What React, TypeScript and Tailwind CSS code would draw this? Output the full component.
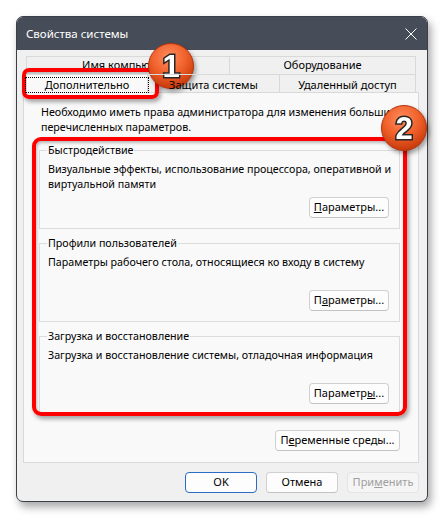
import React from "react";

const ui = "font-['Noto_Sans',sans-serif]";

function Badge({ n }: { n: number }) {
  return (
    <svg width="48" height="48" viewBox="0 0 48 48" className="drop-shadow-[2px_3px_2px_rgba(0,0,0,0.35)]">
      <defs>
        <radialGradient id={`badge${n}`} cx="45%" cy="30%" r="70%">
          <stop offset="0" stopColor="#ff8c5e" />
          <stop offset="0.55" stopColor="#f0602a" />
          <stop offset="1" stopColor="#c8390c" />
        </radialGradient>
      </defs>
      <circle cx="24" cy="24" r="22.5" fill={`url(#badge${n})`} stroke="#b5330b" strokeWidth="1" />
      <text
        x="24"
        y="35"
        textAnchor="middle"
        fontFamily="Liberation Sans, Arial, sans-serif"
        fontWeight="700"
        fontSize="31"
        fill="#ffffff"
        stroke="#262626"
        strokeWidth="3"
        paintOrder="stroke"
      >
        {n}
      </text>
    </svg>
  );
}

function Btn({ children, className = "" }: { children: React.ReactNode; className?: string }) {
  return (
    <div
      className={`h-[21px] flex items-center justify-center whitespace-nowrap rounded-[4px] border border-[#d0d0d0] border-b-[#c2c2c2] bg-[#fdfdfd] text-[11px] ${className}`}
    >
      {children}
    </div>
  );
}

function Group({ title, lines, btn }: { title: string; lines: React.ReactNode; btn: React.ReactNode }) {
  return (
    <fieldset className="w-[361px] min-w-0 border border-[#dcdcdc] px-[8px] pb-[10px]">
      <legend className="ml-[-1px] px-[1px] text-[10.7px] leading-[15px] text-black">{title}</legend>
      <div className="mt-[4px] h-[30px] whitespace-nowrap text-[10.7px] leading-[15px] text-black">{lines}</div>
      <div className="mt-[5px] flex justify-end pr-[2px]">
        <Btn className="w-[80px] text-black">{btn}</Btn>
      </div>
    </fieldset>
  );
}

export default function App() {
  return (
    <div className={`w-[444px] h-[518px] bg-white pl-[16px] pt-[16px] ${ui}`}>
      <div className="relative w-[412px] h-[486px] rounded-[7px] border border-[#3b3f47] bg-[#f0f0f0] shadow-[3px_5px_8px_rgba(0,0,0,0.35)] flex flex-col">
        {/* title bar */}
        <div className="h-[33px] shrink-0 rounded-t-[6px] bg-[#474d58] flex items-center justify-between pl-[9px] pr-[10px]">
          <span className="text-[11.5px] text-white">Свойства системы</span>
          <svg width="12" height="12" viewBox="0 0 12 12">
            <path d="M0.5 0.5 L11.5 11.5 M11.5 0.5 L0.5 11.5" stroke="#ffffff" strokeWidth="1" />
          </svg>
        </div>

        {/* body */}
        <div className="flex-1 flex flex-col pt-[6px]">
          {/* tabs */}
          <div className="ml-[9px] flex h-[18px] w-[390px] text-[11px] text-black">
            <div className="w-[203px] border-t border-l border-[#d9d9d9] flex items-center justify-center">Имя компьютера</div>
            <div className="flex-1 border-t border-l border-r border-[#d9d9d9] flex items-center justify-center">Оборудование</div>
          </div>
          <div className="ml-[9px] flex h-[18px] w-[390px] text-[11px] text-black relative z-10">
            <div className="w-[122px] -mb-px border-t border-l border-r border-[#d9d9d9] bg-[#f9f9f9] flex items-center justify-center pt-px">
              <span className="border border-dotted border-black px-[19px] leading-[14px]">Дополнительно</span>
            </div>
            <div className="w-[131px] border-t border-[#d9d9d9] flex items-center justify-center pt-[3px]">Защита системы</div>
            <div className="flex-1 border-t border-l border-r border-[#d9d9d9] flex items-center justify-center pt-[3px]">Удаленный доступ</div>
          </div>

          {/* panel */}
          <div className="ml-[6px] w-[396px] h-[371px] border border-[#d9d9d9] bg-[#f9f9f9] overflow-hidden flex flex-col pt-[12px]">
            <p className="pl-[17px] whitespace-nowrap text-[10.7px] leading-[15px] text-black">
              Необходимо иметь права администратора для изменения большинства
              <br />
              перечисленных параметров.
            </p>

            <div className="mt-[8px] ml-[15px] flex flex-col gap-[7px]">
              <Group
                title="Быстродействие"
                lines={
                  <>
                    Визуальные эффекты, использование процессора, оперативной и
                    <br />
                    виртуальной памяти
                  </>
                }
                btn={
                  <>
                    <span className="underline">П</span>араметры...
                  </>
                }
              />
              <Group
                title="Профили пользователей"
                lines="Параметры рабочего стола, относящиеся ко входу в систему"
                btn={
                  <>
                    П<span className="underline">а</span>раметры...
                  </>
                }
              />
              <Group
                title="Загрузка и восстановление"
                lines="Загрузка и восстановление системы, отладочная информация"
                btn={
                  <>
                    Параметр<span className="underline">ы</span>...
                  </>
                }
              />
            </div>

            <div className="mt-[15px] flex justify-end pr-[18px]">
              <Btn className="w-[125px] text-black">
                П<span className="underline">е</span>ременные среды...
              </Btn>
            </div>
          </div>

          {/* dialog buttons */}
          <div className="mt-[9px] flex justify-end gap-[9px] pr-[8px]">
            <Btn className="w-[72px] text-black !border-[#2c6cc4]">OK</Btn>
            <Btn className="w-[72px] text-black">Отмена</Btn>
            <Btn className="w-[72px] !bg-[#f5f5f5] !border-[#e3e3e3] text-[#a0a0a0]">
              При<span className="underline">м</span>енить
            </Btn>
          </div>
        </div>

        {/* callouts */}
        <div className="absolute left-[5px] top-[51px] w-[137px] h-[31px] rounded-[7px] border-[4px] border-[#ff0000] shadow-[2px_3px_4px_rgba(0,0,0,0.35),inset_1px_2px_3px_rgba(0,0,0,0.25)]" />
        <div className="absolute left-[15px] top-[120px] w-[375px] h-[279px] rounded-[9px] border-[4px] border-[#ff0000] shadow-[2px_3px_4px_rgba(0,0,0,0.35),inset_1px_2px_3px_rgba(0,0,0,0.25)]" />
        <div className="absolute left-[130px] top-[25px]">
          <Badge n={1} />
        </div>
        <div className="absolute left-[363px] top-[87px]">
          <Badge n={2} />
        </div>
      </div>
    </div>
  );
}
